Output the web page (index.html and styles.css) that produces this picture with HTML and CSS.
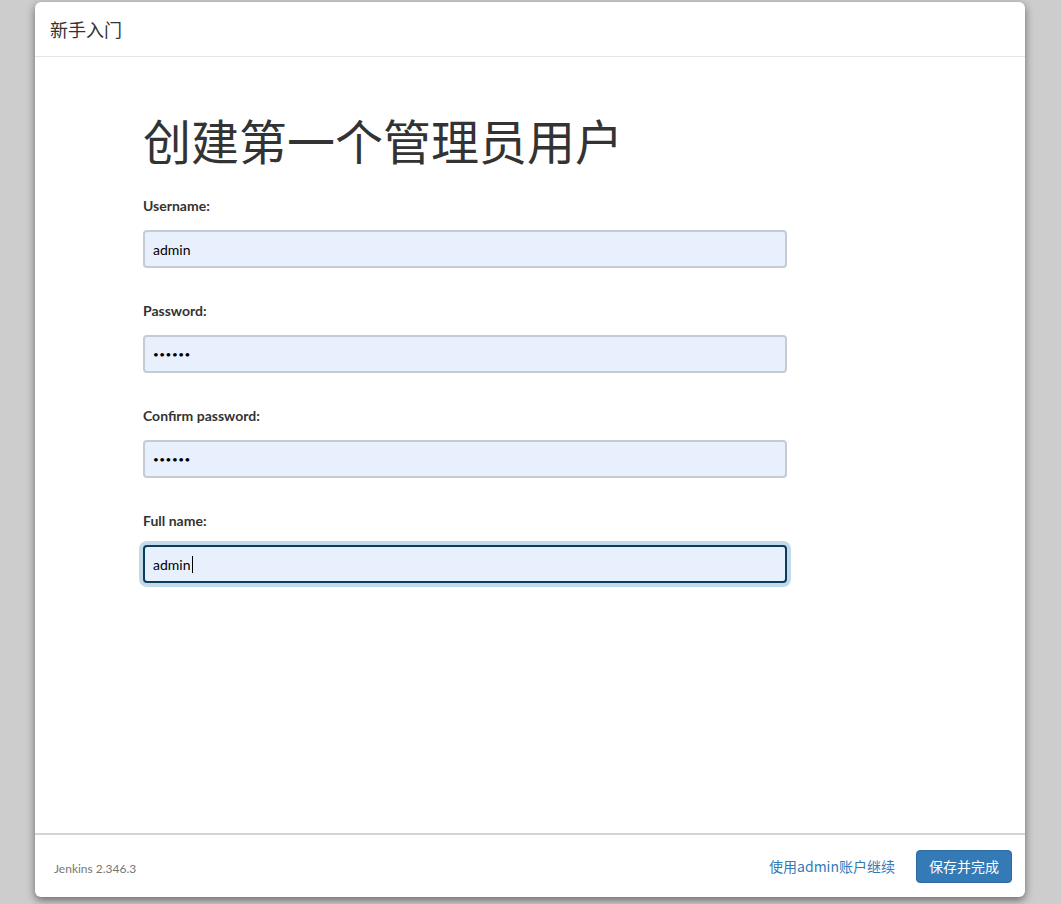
FILE: index.html
```html
<!DOCTYPE html>
<html lang="zh">
<head>
<meta charset="utf-8">
<title>新手入门</title>
<link rel="stylesheet" href="styles.css">
</head>
<body>
<div class="dialog">
  <div class="dialog-header">新手入门</div>
  <div class="dialog-body">
    <h1 class="title">创建第一个管理员用户</h1>
    <form class="form">
      <div class="field">
        <label class="label">Username:</label>
        <input class="input" type="text" value="admin">
      </div>
      <div class="field">
        <label class="label">Password:</label>
        <input class="input input-pass" type="password" value="123456">
      </div>
      <div class="field">
        <label class="label">Confirm password:</label>
        <input class="input input-pass" type="password" value="123456">
      </div>
      <div class="field">
        <label class="label">Full name:</label>
        <div class="input input-focus"><span>admin</span><span class="caret"></span></div>
      </div>
    </form>
  </div>
  <div class="dialog-footer">
    <span class="version">Jenkins 2.346.3</span>
    <div class="actions">
      <a class="link" href="#">使用admin账户继续</a>
      <button class="btn" type="button">保存并完成</button>
    </div>
  </div>
</div>
</body>
</html>
```
FILE: styles.css
```css
html, body {
  margin: 0;
  padding: 0;
  background: #cdcdcd;
  height: 904px;
  overflow: hidden;
}
body {
  font-family: "Lato", "Noto Sans CJK SC", sans-serif;
  color: #333;
}
.dialog {
  margin: 2px 0 0 35px;
  width: 990px;
  height: 895px;
  background: #fff;
  border-radius: 6px;
  box-shadow: 0 3px 9px rgba(0,0,0,0.5);
  display: flex;
  flex-direction: column;
  box-sizing: border-box;
}
.dialog-header {
  height: 54px;
  border-bottom: 1px solid #e5e5e5;
  padding-left: 15px;
  display: flex;
  align-items: center;
  font-size: 18px;
  font-family: "Noto Sans CJK SC", sans-serif;
  color: #333;
}
.dialog-body {
  flex: 1;
  padding: 47px 0 0 108px;
}
.title {
  margin: 0;
  font-family: "Noto Sans CJK SC", sans-serif;
  font-weight: 400;
  font-size: 48px;
  line-height: 70px;
  color: #333;
}
.form {
  margin-top: 23px;
  display: flex;
  flex-direction: column;
  gap: 34px;
}
.field {
  display: flex;
  flex-direction: column;
}
.label {
  font-size: 14px;
  font-weight: 700;
  line-height: 18px;
  color: #333;
  margin-bottom: 15px;
}
.input {
  box-sizing: border-box;
  width: 644px;
  height: 38px;
  border: 2px solid #c4cbd3;
  border-radius: 4px;
  background: #e8f0fe;
  padding: 0 8px;
  font-family: "Lato", sans-serif;
  font-size: 14px;
  color: #000;
  outline: none;
  margin: 0;
}
.input-pass {
  font-size: 10px;
  letter-spacing: 0.5px;
}
.input-focus {
  display: flex;
  align-items: center;
  border-color: #0b3c5d;
  box-shadow: 0 0 0 4px #c3dae8;
}
.caret {
  display: inline-block;
  width: 1px;
  height: 17px;
  background: #000;
  margin-left: 1px;
}
.dialog-footer {
  height: 62px;
  border-top: 2px solid #d4d4d4;
  display: flex;
  align-items: center;
  justify-content: space-between;
  padding: 0 13px 0 19px;
}
.version {
  font-size: 12px;
  color: #777;
  margin-top: 5px;
}
.actions {
  display: flex;
  align-items: center;
  gap: 21px;
}
.link {
  font-family: "Noto Sans CJK SC", sans-serif;
  font-size: 14px;
  color: #337ab7;
  text-decoration: none;
}
.btn {
  width: 96px;
  height: 33px;
  border: 1px solid #2e6da4;
  border-radius: 4px;
  background: #337ab7;
  color: #fff;
  font-family: "Noto Sans CJK SC", sans-serif;
  font-size: 14px;
  padding: 0;
}
```
